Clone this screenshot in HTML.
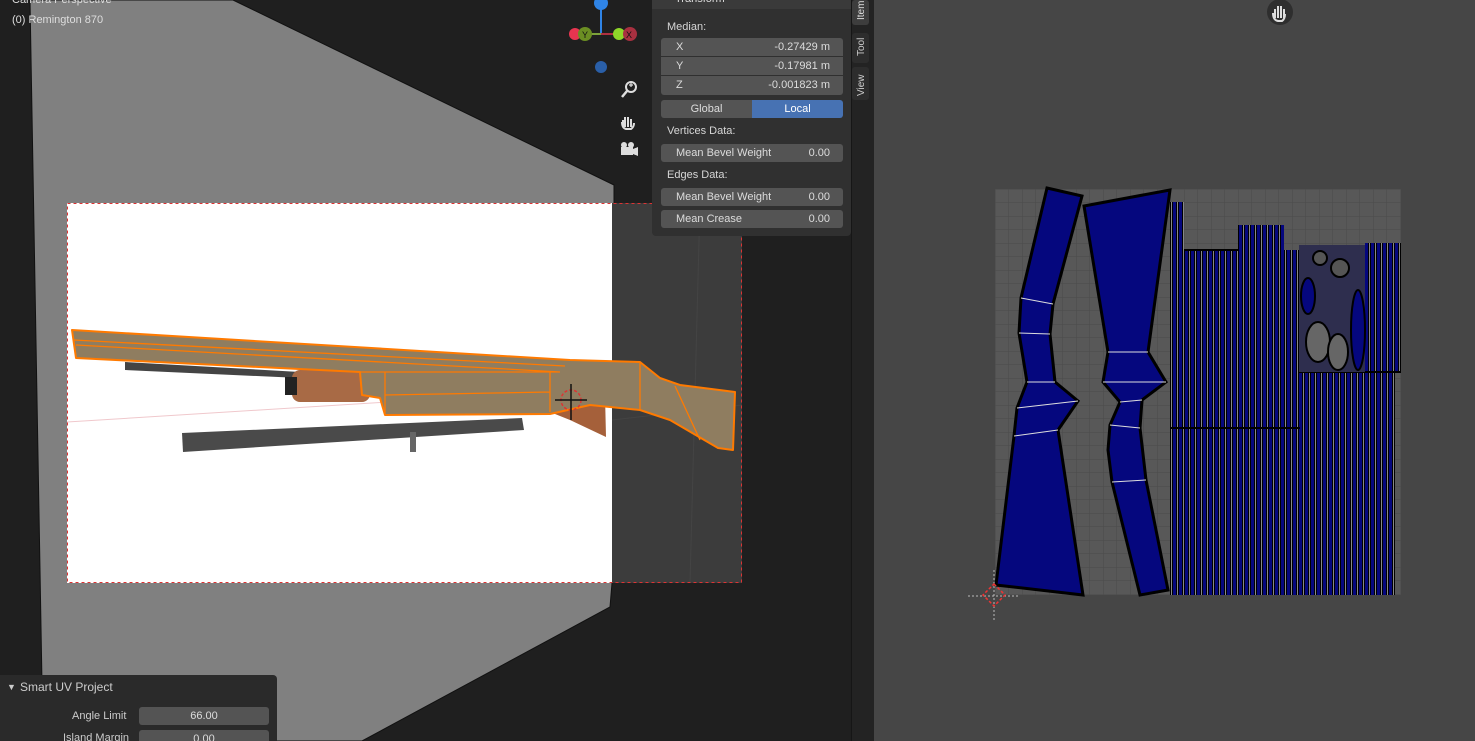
<!DOCTYPE html>
<html><head><meta charset="utf-8"><style>
html,body{margin:0;width:1475px;height:741px;overflow:hidden;background:#1f1f1f;font-family:"Liberation Sans","DejaVu Sans",sans-serif;}
body{position:relative}
svg{position:absolute;left:0;top:0}
.t{position:absolute;color:#e0e0e0;font-size:11px;white-space:nowrap}
.panel{position:absolute;left:652px;top:0;width:199px;height:236px;background:#303030;border-radius:0 0 4px 4px}
.fld{position:absolute;left:9px;width:182px;height:18px;background:#545454;border-radius:3px;color:#dcdcdc;font-size:11px;line-height:18px}
.lab{position:absolute;left:15px;color:#d6d6d6;font-size:11px}
</style></head><body>
<svg width="1475" height="741" viewBox="0 0 1475 741">
<defs>
<pattern id="grid" width="13.5" height="13.5" patternUnits="userSpaceOnUse" x="995" y="189">
<rect width="13.5" height="13.5" fill="#585858"/><path d="M0 0H13.5M0 0V13.5" stroke="#4a4a4a" stroke-width="1"/>
</pattern>
<pattern id="stripe" width="6" height="10" patternUnits="userSpaceOnUse">
<rect width="6" height="10" fill="#05077e"/><rect x="0" width="1" height="10" fill="#000"/><rect x="1" width="1" height="10" fill="#888"/><rect x="2" width="1" height="10" fill="#000"/>
</pattern>
</defs>
<rect x="0" y="0" width="852" height="741" fill="#1f1f1f"/>
<polygon points="30,0 233,0 614,185 614,203 612,583 610,607 362,741 43,741" fill="#808080" stroke="#111" stroke-width="1"/>
<rect x="67" y="203" width="675" height="380" fill="#3c3c3c"/>
<line x1="612" y1="420" x2="742" y2="405" stroke="#444" />
<line x1="700" y1="203" x2="690" y2="583" stroke="#444" />
<rect x="67" y="203" width="545" height="380" fill="#fff"/>
<line x1="67" y1="422" x2="612" y2="388" stroke="#f0c8cc" stroke-width="1"/>
<rect x="67.5" y="203.5" width="674" height="379" fill="none" stroke="#d33" stroke-width="1" stroke-dasharray="3,3"/>
<!-- gun -->
<polygon points="125,362 300,372 300,378 125,370" fill="#444"/>
<rect x="292" y="370" width="78" height="32" rx="8" fill="#a86a45"/>
<rect x="285" y="377" width="12" height="18" fill="#222"/>
<polygon points="182,433 522,418 524,430 183,452" fill="#4a4a4a"/>
<rect x="410" y="432" width="6" height="20" fill="#666"/>
<polygon points="545,400 605,395 606,437 570,420 545,410" fill="#a5603a"/>
<polygon points="72,330 570,360 640,362 660,378 680,385 735,392 733,450 718,448 670,420 640,410 590,405 550,414 385,415 380,398 362,395 360,372 76,358" fill="#8f7d60" stroke="#ff7a00" stroke-width="2" stroke-linejoin="round"/>
<path d="M76,345 L560,372 M74,340 L565,366 M385,372 L385,415 M360,372 L560,372 M550,372 L550,412 M385,395 L550,392 M640,362 L640,410 M675,386 L700,440" stroke="#ff7a00" stroke-width="1.3" fill="none"/>
<circle cx="571" cy="400" r="10" fill="none" stroke="#d33" stroke-dasharray="3,2" stroke-width="1.5"/>
<path d="M571,384V420M555,400H587" stroke="#111" stroke-width="1.5"/>
<!-- gizmo -->
<line x1="601" y1="34" x2="601" y2="4" stroke="#2f84e6" stroke-width="2"/>
<line x1="601" y1="34" x2="585" y2="34" stroke="#7ca33a" stroke-width="2"/>
<line x1="601" y1="34" x2="630" y2="34" stroke="#b03040" stroke-width="2"/>
<circle cx="601" cy="3" r="7" fill="#2f84e6"/>
<circle cx="575" cy="34" r="6" fill="#e83550"/>
<circle cx="585" cy="34" r="7" fill="#6b8e23"/>
<circle cx="619" cy="34" r="6" fill="#8fd629"/>
<circle cx="630" cy="34" r="7" fill="#a83040"/>
<text x="582" y="38" font-size="9" fill="#111" font-family="Liberation Sans">Y</text>
<text x="626" y="38" font-size="9" fill="#111" font-family="Liberation Sans">X</text>
<circle cx="601" cy="67" r="6" fill="#2a5fa8"/>
<circle cx="631" cy="87" r="5" fill="none" stroke="#ddd" stroke-width="2"/><line x1="627" y1="91" x2="622" y2="97" stroke="#ddd" stroke-width="2.5"/>
<path d="M629,85h4M631,83v4" stroke="#ddd" stroke-width="1.2"/>
<path d="M623,127 l0,-7 m2,7 l0,-10 m3,10 l0,-10 m3,10 l0,-8 M622,122 q0,6 4,7 h5 q3,-2 3,-6" stroke="#ddd" stroke-width="2" fill="none"/>
<rect x="621" y="147" width="12" height="8" fill="#ddd"/><circle cx="624" cy="145" r="3" fill="#ddd"/><circle cx="631" cy="145" r="3" fill="#ddd"/><polygon points="633,149 638,147 638,156 633,154" fill="#ddd"/>
<rect x="851" y="0" width="23" height="741" fill="#232323"/>
<line x1="851.5" y1="0" x2="851.5" y2="741" stroke="#161616"/>
<rect x="852" y="0" width="17" height="25" rx="3" fill="#3d3d3d"/>
<rect x="852" y="33" width="17" height="30" rx="3" fill="#2d2d2d"/>
<rect x="852" y="67" width="17" height="33" rx="3" fill="#2d2d2d"/>
<text transform="translate(864,20) rotate(-90)" font-size="10" fill="#ddd" font-family="Liberation Sans">Item</text>
<text transform="translate(864,56) rotate(-90)" font-size="10" fill="#ccc" font-family="Liberation Sans">Tool</text>
<text transform="translate(864,96) rotate(-90)" font-size="10" fill="#ccc" font-family="Liberation Sans">View</text>
<rect x="874" y="0" width="601" height="741" fill="#464646"/>
<circle cx="1280" cy="12" r="13" fill="#2e2e2e"/>
<path d="M1275,18 l0,-9 m3,9 l0,-12 m3,12 l0,-12 m3,12 l0,-9 M1273,13 q0,7 5,8 h4 q3,-2 3,-7" stroke="#ddd" stroke-width="2" fill="none"/>
<rect x="995" y="189" width="406" height="406" fill="url(#grid)"/>
<polygon points="1047,188 1082,196 1053,304 1050,334 1055,382 1078,401 1058,430 1083,595 996,585 1014,436 1017,408 1027,382 1019,333 1021,298" fill="#05077e" stroke="#000" stroke-width="3"/>
<path d="M1021,298L1053,304M1019,333L1050,334M1027,382L1055,382M1017,408L1078,401M1014,436L1058,430" stroke="#ddd" stroke-width="1"/>
<polygon points="1084,206 1170,190 1148,352 1166,382 1142,400 1140,428 1146,480 1168,590 1140,595 1112,482 1108,450 1110,425 1120,402 1103,382 1108,352" fill="#05077e" stroke="#000" stroke-width="3"/>
<path d="M1108,352L1148,352M1103,382L1166,382M1120,402L1142,400M1110,425L1140,428M1112,482L1146,480" stroke="#ddd" stroke-width="1"/>
<rect x="1170" y="202" width="14" height="393" fill="url(#stripe)"/>
<rect x="1184" y="250" width="54" height="345" fill="url(#stripe)"/>
<rect x="1238" y="225" width="46" height="370" fill="url(#stripe)"/>
<rect x="1284" y="250" width="15" height="345" fill="url(#stripe)"/>
<rect x="1299" y="372" width="66" height="223" fill="url(#stripe)"/>
<rect x="1365" y="243" width="36" height="130" fill="url(#stripe)"/>
<rect x="1365" y="373" width="30" height="222" fill="url(#stripe)"/>
<path d="M1170,428H1300M1299,372H1401M1184,250H1238" stroke="#000" stroke-width="2"/>
<rect x="1299" y="245" width="66" height="127" fill="#2e2e4e"/>
<ellipse cx="1308" cy="296" rx="7" ry="18" fill="#05077e" stroke="#000" stroke-width="2"/>
<ellipse cx="1358" cy="330" rx="7" ry="40" fill="#05077e" stroke="#000" stroke-width="2"/>
<ellipse cx="1318" cy="342" rx="12" ry="20" fill="#666" stroke="#000" stroke-width="2"/>
<ellipse cx="1338" cy="352" rx="10" ry="18" fill="#666" stroke="#000" stroke-width="2"/>
<circle cx="1320" cy="258" r="7" fill="#555" stroke="#000" stroke-width="2"/>
<circle cx="1340" cy="268" r="9" fill="#555" stroke="#000" stroke-width="2"/>
<path d="M968,596H1020M994,570V620" stroke="#bbb" stroke-width="1" stroke-dasharray="2,2"/>
<polygon points="994,584 1005,595 994,606 983,595" fill="none" stroke="#e33" stroke-width="1.5" stroke-dasharray="3,2"/>
</svg>
<div class="t" style="left:12px;top:-6px;color:#ddd">Camera Perspective</div>
<div class="t" style="left:12px;top:14px;color:#ddd">(0) Remington 870</div>
<div class="panel">
<div style="position:absolute;left:0;top:0;width:199px;height:9px;background:#3a3a3a;overflow:hidden"><span style="position:absolute;left:23px;top:-7px;font-size:11px;color:#ddd">Transform</span></div>
<div class="lab" style="top:21px">Median:</div>
<div class="fld" style="top:38px;border-radius:3px 3px 0 0"><span style="position:absolute;left:15px">X</span><span style="position:absolute;right:13px">-0.27429 m</span></div>
<div class="fld" style="top:57px;border-radius:0"><span style="position:absolute;left:15px">Y</span><span style="position:absolute;right:13px">-0.17981 m</span></div>
<div class="fld" style="top:76px;border-radius:0 0 3px 3px;height:19px"><span style="position:absolute;left:15px">Z</span><span style="position:absolute;right:13px">-0.001823 m</span></div>
<div class="fld" style="top:100px;width:91px;border-radius:3px 0 0 3px;text-align:center">Global</div>
<div class="fld" style="top:100px;left:100px;width:91px;border-radius:0 3px 3px 0;background:#4772b3;color:#fff;text-align:center">Local</div>
<div class="lab" style="top:125px">Vertices Data:</div>
<div class="fld" style="top:144px"><span style="position:absolute;left:15px">Mean Bevel Weight</span><span style="position:absolute;right:13px">0.00</span></div>
<div class="lab" style="top:169px">Edges Data:</div>
<div class="fld" style="top:188px"><span style="position:absolute;left:15px">Mean Bevel Weight</span><span style="position:absolute;right:13px">0.00</span></div>
<div class="fld" style="top:210px"><span style="position:absolute;left:15px">Mean Crease</span><span style="position:absolute;right:13px">0.00</span></div>
</div>
<div style="position:absolute;left:0;top:675px;width:277px;height:66px;background:#2a2a2a;border-radius:0 4px 0 0;overflow:hidden">
<div class="t" style="left:7px;top:7px;font-size:9px;color:#ccc">▼</div>
<div class="t" style="left:20px;top:5px;font-size:12px;color:#ccc">Smart UV Project</div>
<div class="t" style="left:72px;top:35px;color:#ccc">Angle Limit</div>
<div style="position:absolute;left:139px;top:32px;width:130px;height:18px;background:#545454;border-radius:3px;color:#ddd;font-size:11px;line-height:18px;text-align:center">66.00</div>
<div class="t" style="left:63px;top:57px;color:#ccc">Island Margin</div>
<div style="position:absolute;left:139px;top:55px;width:130px;height:18px;background:#545454;border-radius:3px;color:#ddd;font-size:11px;line-height:18px;text-align:center">0.00</div>
</div>
</body></html>
